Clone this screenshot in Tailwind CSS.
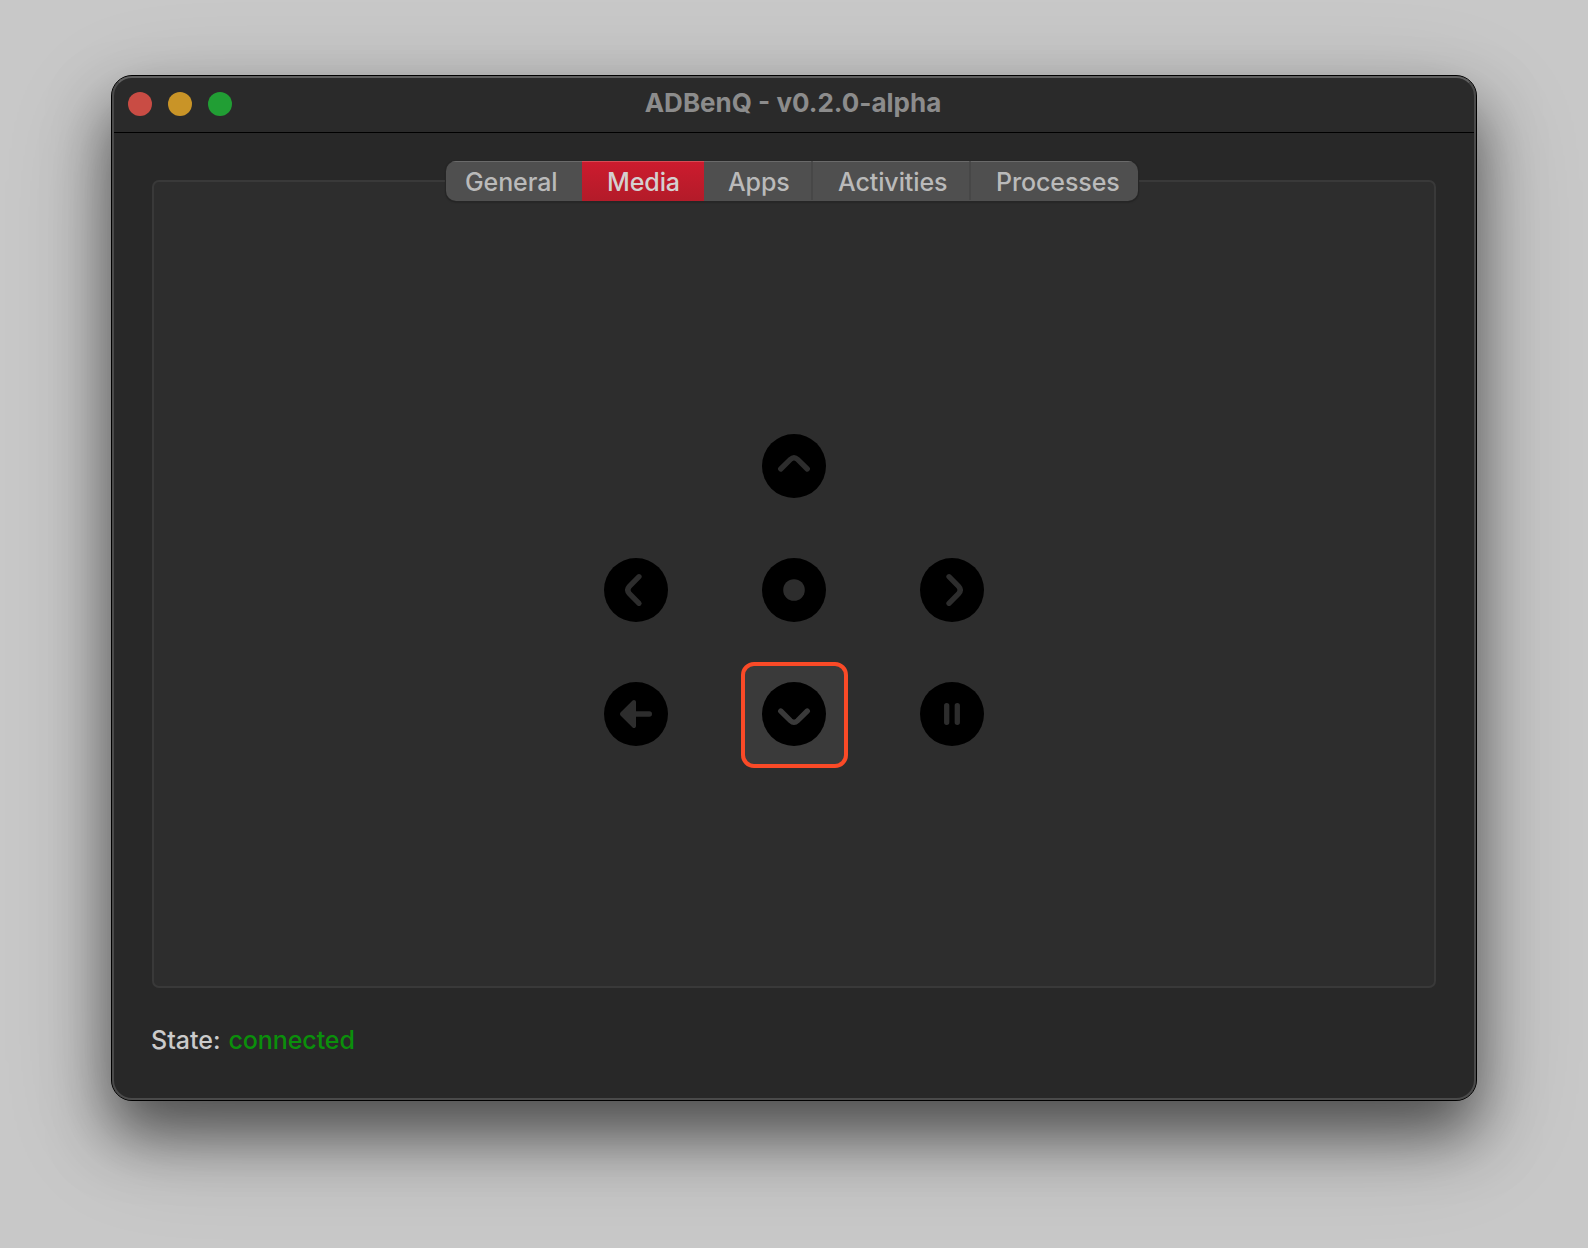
<!DOCTYPE html>
<html lang="en">
<head>
<meta charset="utf-8">
<title>ADBenQ</title>
<script src="https://cdn.jsdelivr.net/npm/@tailwindcss/browser@4"></script>
</head>
<body class="h-screen overflow-hidden bg-[#c8c8c8] pt-[75px] pl-[111px] font-[Inter,sans-serif] text-[25px] leading-10">
<main class="relative flex h-[1026px] w-[1366px] flex-col overflow-visible rounded-[21px] border border-black bg-[#282828] shadow-[0_33px_60px_rgba(0,0,0,0.53),0_33px_110px_rgba(0,0,0,0.2)]">
  <header class="relative flex h-[57px] shrink-0 items-center rounded-t-[20px] border-b border-black bg-[#2a2a2a] pl-4">
    <div class="flex gap-4">
      <span class="size-6 rounded-full bg-[#c94c44]"></span>
      <span class="size-6 rounded-full bg-[#c99427]"></span>
      <span class="size-6 rounded-full bg-[#219e34]"></span>
    </div>
    <h1 class="absolute right-[2px] left-0 top-[7px] text-center text-[26px] font-bold text-[#8c8c8c]">ADBenQ - v0.2.0-alpha</h1>
  </header>
  <section class="mx-10 mt-[47px] flex h-[808px] shrink-0 flex-col items-center rounded-[7px] border-2 border-[#393939] bg-[#2d2d2d]">
    <nav class="-mt-[21px] -ml-1 flex h-10 w-[692px] shrink-0 overflow-hidden rounded-[10px] bg-[#4f4f4f] font-[450] tracking-[-0.1px] text-[#bababa] shadow-[0_0_0_1px_#262626,0_1px_2px_rgba(0,0,0,0.5)]">
      <button class="w-[136px] border-t border-[#6a6a6a] pl-[19px] text-left">General</button>
      <button class="w-[122px] border-t border-[#d64b55] bg-linear-to-b from-[#cc1b2e] to-[#b31b29] pl-[25px] text-left text-[#d4d0d0]">Media</button>
      <button class="w-[107px] border-t border-[#6a6a6a] pl-[24px] text-left">Apps</button>
      <i class="mb-px mt-px w-[2px] bg-[#474747]"></i>
      <button class="w-[156px] border-t border-[#6a6a6a] pl-[25px] text-left">Activities</button>
      <i class="mb-px mt-px w-[2px] bg-[#474747]"></i>
      <button class="w-[167px] border-t border-[#6a6a6a] pl-[25px] text-left">Processes</button>
    </nav>
    <div class="mt-[212px] grid grid-cols-[106px_106px_106px] gap-x-[52px] gap-y-[18px] fill-[#2d2d2d] stroke-[#2d2d2d] [&_button]:flex [&_button]:h-[106px] [&_button]:items-center [&_button]:justify-center [&_svg]:size-16 [&_svg]:rounded-full [&_svg]:bg-black">
      <button class="col-start-2" aria-label="Up"><svg viewBox="-32 -32 64 64"><path d="M-13.3 3L-3.6 -6.6Q0 -10 3.6 -6.6L13.3 3" fill="none" stroke-width="5.3" stroke-linecap="round"/></svg></button>
      <button class="col-start-1" aria-label="Left"><svg viewBox="-32 -32 64 64"><path d="M3 -13.3L-6.6 -3.6Q-10 0 -6.6 3.6L3 13.3" fill="none" stroke-width="5.3" stroke-linecap="round"/></svg></button>
      <button aria-label="Select"><svg viewBox="-32 -32 64 64"><circle r="10.8" stroke="none"/></svg></button>
      <button aria-label="Right"><svg viewBox="-32 -32 64 64"><path d="M-3 -13.3L6.6 -3.6Q10 0 6.6 3.6L-3 13.3" fill="none" stroke-width="5.3" stroke-linecap="round"/></svg></button>
      <button aria-label="Back"><svg viewBox="-32 -32 64 64"><path stroke="none" d="M-15.5 -1.6Q-16.7 0 -15.5 1.6L-3.4 13.6C-2 14.8 0 13.8 0 12V2.7H13.3A2.7 2.7 0 0 0 13.3 -2.7H0V-12C0 -13.8 -2 -14.8 -3.4 -13.6Z"/></svg></button>
      <button class="relative stroke-[#3a3a3a]" aria-label="Down"><span class="absolute top-px right-[-1px] bottom-[-1px] left-0 rounded-[13px] border-4 border-[#fa4a27] bg-[#3a3a3a]"></span><svg class="relative" viewBox="-32 -32 64 64"><path d="M-13.3 -3L-3.6 6.6Q0 10 3.6 6.6L13.3 -3" fill="none" stroke-width="5.3" stroke-linecap="round"/></svg></button>
      <button aria-label="Pause"><svg viewBox="-32 -32 64 64"><path d="M-5.3 -8.3V8.3M5.3 -8.3V8.3" fill="none" stroke-width="5.3" stroke-linecap="round"/></svg></button>
    </div>
  </section>
  <p class="mt-[32px] flex pl-[39px] font-[450] text-[#cbcbcb]"><span>State:</span><span class="ml-2 tracking-[-0.1px] text-[#0b8f0b]">connected</span></p>
  <div class="pointer-events-none absolute inset-0 rounded-[20px] border-2 border-[#4a4a4a] border-t-[#5f5f5f]"></div>
</main>
</body>
</html>
